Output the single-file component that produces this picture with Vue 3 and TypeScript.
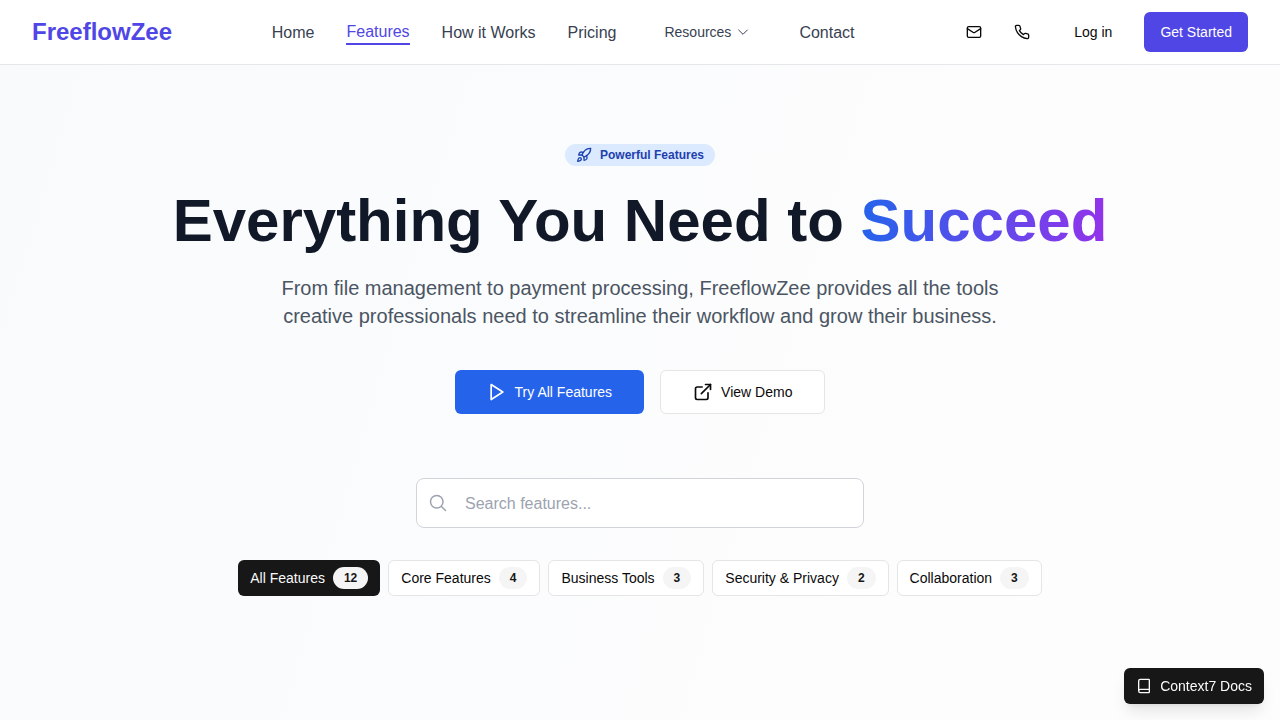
<script setup lang="ts">
import { ref } from 'vue'

interface NavLink {
  label: string
  active?: boolean
}

interface Category {
  label: string
  count: number
}

const leadingLinks: NavLink[] = [
  { label: 'Home' },
  { label: 'Features', active: true },
  { label: 'How it Works' },
  { label: 'Pricing' },
]

const categories: Category[] = [
  { label: 'All Features', count: 12 },
  { label: 'Core Features', count: 4 },
  { label: 'Business Tools', count: 3 },
  { label: 'Security & Privacy', count: 2 },
  { label: 'Collaboration', count: 3 },
]

const selected = ref('All Features')
const query = ref('')
</script>

<template>
  <div class="page">
    <header class="header">
      <a class="logo" href="#">FreeflowZee</a>
      <nav class="nav" aria-label="Main">
        <a
          v-for="link in leadingLinks"
          :key="link.label"
          href="#"
          class="nav-link"
          :class="{ active: link.active }"
        >{{ link.label }}</a>
        <button type="button" class="resources">
          Resources
          <svg class="icon-sm thin" viewBox="0 0 24 24" aria-hidden="true"><path d="m5.5 9 6.5 6.5L18.500 9" /></svg>
        </button>
        <a href="#" class="nav-link">Contact</a>
      </nav>
      <div class="actions">
        <div class="contact-icons">
          <button type="button" class="icon-button" aria-label="Email">
            <svg class="icon-sm" viewBox="0 0 24 24" aria-hidden="true">
              <rect width="20" height="16" x="2" y="4" rx="2" />
              <path d="m22 7-8.97 5.7a1.94 1.94 0 0 1-2.06 0L2 7" />
            </svg>
          </button>
          <button type="button" class="icon-button" aria-label="Phone">
            <svg class="icon-sm" viewBox="0 0 24 24" aria-hidden="true">
              <path d="M22 16.92v3a2 2 0 0 1-2.18 2 19.79 19.79 0 0 1-8.63-3.07 19.5 19.5 0 0 1-6-6 19.79 19.79 0 0 1-3.07-8.67A2 2 0 0 1 4.11 2h3a2 2 0 0 1 2 1.72 12.84 12.84 0 0 0 .7 2.81 2 2 0 0 1-.45 2.11L8.09 9.91a16 16 0 0 0 6 6l1.27-1.27a2 2 0 0 1 2.11-.45 12.84 12.84 0 0 0 2.81.7A2 2 0 0 1 22 16.92z" />
            </svg>
          </button>
        </div>
        <a href="#" class="login">Log in</a>
        <a href="#" class="get-started">Get Started</a>
      </div>
    </header>

    <main class="hero">
      <div class="pill">
        <svg class="icon-sm" viewBox="0 0 24 24" aria-hidden="true">
          <path d="M4.5 16.5c-1.5 1.26-2 5-2 5s3.74-.5 5-2c.71-.84.7-2.13-.09-2.91a2.18 2.18 0 0 0-2.91-.09z" />
          <path d="m12 15-3-3a22 22 0 0 1 2-3.95A12.88 12.88 0 0 1 22 2c0 2.72-.78 7.5-6 11a22.35 22.35 0 0 1-4 2z" />
          <path d="M9 12H4s.55-3.03 2-4c1.62-1.08 5 0 5 0" />
          <path d="M12 15v5s3.03-.55 4-2c1.08-1.62 0-5 0-5" />
        </svg>
        Powerful Features
      </div>
      <h1 class="title">Everything You Need to <span class="accent">Succeed</span></h1>
      <p class="lead">
        From file management to payment processing, FreeflowZee provides all the tools
        creative professionals need to streamline their workflow and grow their business.
      </p>
      <div class="cta-row">
        <a href="#" class="cta primary">
          <svg class="icon-md" viewBox="0 0 24 24" aria-hidden="true"><path d="m5 3 14 9-14 9V3z" /></svg>
          Try All Features
        </a>
        <a href="#" class="cta outline">
          <svg class="icon-md" viewBox="0 0 24 24" aria-hidden="true">
            <path d="M15 3h6v6" />
            <path d="M10 14 21 3" />
            <path d="M18 13v6a2 2 0 0 1-2 2H5a2 2 0 0 1-2-2V8a2 2 0 0 1 2-2h6" />
          </svg>
          View Demo
        </a>
      </div>

      <label class="search">
        <svg class="icon-md search-icon" viewBox="0 0 24 24" aria-hidden="true">
          <path d="m21 21-5.197-5.197m0 0A7.500 7.500 0 1 0 5.196 5.196a7.500 7.500 0 0 0 10.607 10.607Z" />
        </svg>
        <input v-model="query" type="text" placeholder="Search features..." aria-label="Search features" />
      </label>

      <div class="filters">
        <button
          v-for="category in categories"
          :key="category.label"
          type="button"
          class="filter"
          :class="{ selected: category.label === selected }"
          :aria-pressed="category.label === selected"
          @click="selected = category.label"
        >
          {{ category.label }}
          <span class="count">{{ category.count }}</span>
        </button>
      </div>
    </main>

    <button type="button" class="docs">
      <svg class="icon-sm" viewBox="0 0 24 24" aria-hidden="true">
        <path d="M4 19.5v-15A2.5 2.5 0 0 1 6.500 2H19a1 1 0 0 1 1 1v18a1 1 0 0 1-1 1H6.500a1 1 0 0 1 0-5H20" />
      </svg>
      Context7 Docs
    </button>
  </div>
</template>

<style>
body {
  margin: 0;
}
</style>

<style scoped>
.page,
.page * {
  box-sizing: border-box;
}

.page {
  min-height: 100vh;
  background: linear-gradient(106deg, #f8fafc, #fdfdfd 80%, #fefdfd);
  color: #0a0a0a;
  font-family: "Liberation Sans", Arial, sans-serif;
  font-size: 16px;
  line-height: 24px;
}

a {
  color: inherit;
  text-decoration: none;
}

button,
input {
  font: inherit;
  color: inherit;
}

button {
  cursor: pointer;
}

svg {
  flex: none;
  fill: none;
  stroke: currentColor;
  stroke-width: 2;
  stroke-linecap: round;
  stroke-linejoin: round;
}

.icon-sm {
  width: 16px;
  height: 16px;
}

.icon-md {
  width: 20px;
  height: 20px;
}

.thin {
  stroke-width: 1.5;
}

.search-icon {
  stroke-width: 1.8;
}

.header {
  display: flex;
  align-items: center;
  justify-content: space-between;
  height: 65px;
  padding: 0 32px;
  background: #fff;
  border-bottom: 1px solid #e5e7eb;
}

.logo {
  color: #4f46e5;
  font-size: 24px;
  line-height: 32px;
  font-weight: 700;
}

.nav {
  display: flex;
  align-items: center;
  gap: 32px;
  color: #374151;
}

.nav-link {
  padding-top: 2px;
  line-height: 22px;
}

.nav-link.active {
  color: #4f46e5;
  border-bottom: 2px solid #4f46e5;
}

.resources {
  display: flex;
  align-items: center;
  gap: 4px;
  height: 40px;
  padding: 0 16px;
  border: 0;
  background: none;
  font-size: 14px;
  line-height: 20px;
}

.actions {
  display: flex;
  align-items: center;
  gap: 16px;
  font-size: 14px;
  line-height: 20px;
}

.contact-icons {
  display: flex;
  gap: 8px;
}

.icon-button {
  display: flex;
  align-items: center;
  justify-content: center;
  width: 40px;
  height: 36px;
  padding: 0;
  border: 0;
  background: none;
}

.login,
.get-started {
  padding: 10px 16px;
  border-radius: 6px;
}

.get-started {
  background: #4f46e5;
  color: #fff;
}

.hero {
  display: flex;
  flex-direction: column;
  align-items: center;
  padding: 79px 32px 80px;
}

.pill {
  display: flex;
  align-items: center;
  gap: 8px;
  height: 22px;
  padding: 0 11px;
  border-radius: 11px;
  background: #dbeafe;
  color: #1e40af;
  font-size: 12px;
  line-height: 16px;
  font-weight: 700;
}

.title {
  margin: 25px 0 23px;
  color: #111827;
  font-size: 60px;
  line-height: 60px;
  font-weight: 700;
  text-align: center;
}

.accent {
  background: linear-gradient(to right, #2563eb, #9333ea);
  background-clip: text;
  -webkit-background-clip: text;
  color: transparent;
}

.lead {
  max-width: 768px;
  margin: 0 0 40px;
  color: #4b5563;
  font-size: 20px;
  line-height: 28px;
  text-align: center;
}

.cta-row {
  display: flex;
  gap: 16px;
  margin-bottom: 64px;
}

.cta {
  display: flex;
  align-items: center;
  gap: 8px;
  height: 44px;
  padding: 0 32px;
  border-radius: 6px;
  font-size: 14px;
  line-height: 20px;
}

.primary {
  background: #2563eb;
  color: #fff;
}

.outline {
  background: #fff;
  border: 1px solid #e5e5e5;
}

.search {
  display: flex;
  align-items: center;
  gap: 17px;
  width: 100%;
  max-width: 448px;
  height: 50px;
  margin-bottom: 32px;
  padding: 0 11px;
  border: 1px solid #d1d5db;
  border-radius: 8px;
  background: #fff;
  color: #9ca3af;
}

.search input {
  flex: 1;
  min-width: 0;
  padding: 2px 0 0;
  border: 0;
  outline: 0;
  background: none;
  color: #0a0a0a;
}

.search input::placeholder {
  color: #9ca3af;
  opacity: 1;
}

.filters {
  display: flex;
  flex-wrap: wrap;
  justify-content: center;
  gap: 8px;
}

.filter {
  display: flex;
  align-items: center;
  gap: 8px;
  height: 36px;
  padding: 0 12px;
  border: 1px solid #e5e5e5;
  border-radius: 6px;
  background: #fff;
  font-size: 14px;
  line-height: 20px;
}

.filter.selected {
  border: 0;
  background: #171717;
  color: #fafafa;
}

.count {
  padding: 3px 11px;
  border-radius: 11px;
  background: #f5f5f5;
  color: #171717;
  font-size: 12px;
  line-height: 16px;
  font-weight: 700;
}

.docs {
  position: fixed;
  right: 16px;
  bottom: 16px;
  display: flex;
  align-items: center;
  gap: 8px;
  height: 36px;
  padding: 0 12px;
  border: 0;
  border-radius: 6px;
  background: #171717;
  color: #fafafa;
  font-size: 14px;
  line-height: 20px;
  box-shadow: 0 10px 15px -3px rgb(0 0 0 / 10%), 0 4px 6px -4px rgb(0 0 0 / 10%);
}
</style>
